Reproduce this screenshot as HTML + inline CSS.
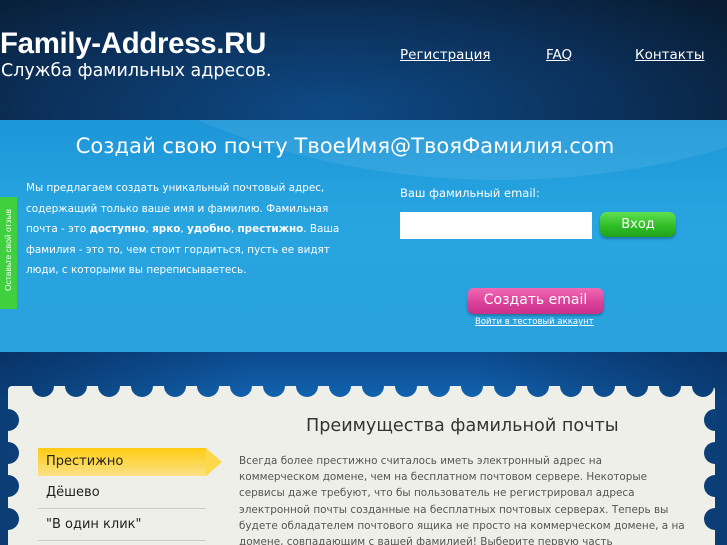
<!DOCTYPE html>
<html><head><meta charset="utf-8"><style>
*{margin:0;padding:0;box-sizing:border-box}
html,body{width:727px;height:545px;overflow:hidden}
body{font-family:"DejaVu Sans","Liberation Sans",sans-serif;background:#0d3a6e;position:relative}
#hdr{position:absolute;left:0;top:0;width:727px;height:120px;background:radial-gradient(ellipse 500px 160px at 330px 110px,#0e4a86,#0b2f58 60%,#081c33 100%)}
.logo{position:absolute;left:0;top:27px;color:#fff;font:bold 29.4px "Liberation Sans",sans-serif;letter-spacing:-0.3px}
.sub{position:absolute;left:1px;top:61px;color:#fff;font-size:17.5px}
.nav{position:absolute;top:47px;color:#fff;font-size:13.5px;text-decoration:underline}
#band{position:absolute;left:0;top:120px;width:727px;height:232px;background:linear-gradient(#1d96d8,#27a4e0 40%,#2aa2de);overflow:hidden}
#band:before{content:"";position:absolute;left:-100px;top:-820px;width:1200px;height:880px;border-radius:50%;background:rgba(255,255,255,0.08)}
h1{position:absolute;top:13px;left:0;width:690px;text-align:center;color:#fff;font-weight:normal;font-size:21.1px}
.intro{position:absolute;left:26px;top:58px;width:330px;color:#fff;font-size:10.4px;line-height:20.5px}
.lbl{position:absolute;left:400px;top:66px;color:#fff;font-size:11.5px}
.inp{position:absolute;left:400px;top:92px;width:192px;height:27px;background:#fff}
.btn{position:absolute;border-radius:7px;color:#fff;text-align:center}
.vhod{left:600px;top:92px;width:76px;height:25px;background:linear-gradient(#5fe04f,#2dbb24 60%,#21a11b);font-size:13px;line-height:25px;box-shadow:0 2px 2px rgba(0,0,0,.25)}
.create{left:467px;top:168px;width:137px;height:26px;background:linear-gradient(#f069b4,#d93f98 60%,#c9318a);font-size:14px;line-height:25px;box-shadow:0 2px 2px rgba(0,0,0,.25)}
.test{position:absolute;left:475px;top:197px;color:#fff;font-size:8.5px;text-decoration:underline}
#fb{position:absolute;left:0;top:197px;width:17px;height:112px;background:#3fcf3f}
#fb span{position:absolute;left:-44px;top:48px;width:104px;transform:rotate(-90deg);color:#fff;font:8.5px "Liberation Sans",sans-serif;white-space:nowrap;text-align:center}
#low{position:absolute;left:0;top:352px;width:727px;height:193px;background:linear-gradient(90deg,rgba(5,30,70,.55),rgba(5,30,70,0) 35%,rgba(5,30,70,0) 65%,rgba(5,30,70,.55)),linear-gradient(#0c4a8e,#1264b0 48px,#135fa8)}
svg{position:absolute;left:0;top:352px}
h2{position:absolute;left:306px;top:416px;color:#333;font-weight:normal;font-size:17.6px}
.menu{position:absolute;left:38px;width:168px;font-size:13px;color:#222;padding-left:8px}
.m1{top:448px;height:28px;line-height:28px;background:linear-gradient(#ffcc11,#fbe187);width:168px}
.m1:after{content:"";position:absolute;right:-16px;top:0;border-left:16px solid #fcd84a;border-top:14px solid transparent;border-bottom:14px solid transparent}
.m2{top:478px;height:31px;line-height:30px;border-bottom:1px solid #ccc}
.m3{top:510px;height:31px;line-height:30px;border-bottom:1px solid #ccc}
.txt{position:absolute;left:239px;top:453px;white-space:nowrap;color:#555;font-size:10.45px;line-height:16.2px}
</style></head><body>
<div id="hdr">
<div class="logo">Family-Address.RU</div>
<div class="sub">Служба фамильных адресов.</div>
<div class="nav" style="left:400px">Регистрация</div>
<div class="nav" style="left:546px">FAQ</div>
<div class="nav" style="left:635px">Контакты</div>
</div>
<div id="band">
<h1>Создай свою почту ТвоеИмя@ТвояФамилия.com</h1>
<div class="intro">Мы предлагаем создать уникальный почтовый адрес, содержащий только ваше имя и фамилию. Фамильная почта - это <b>доступно</b>, <b>ярко</b>, <b>удобно</b>, <b>престижно</b>. Ваша фамилия - это то, чем стоит гордиться, пусть ее видят люди, с которыми вы переписываетесь.</div>
<div class="lbl">Ваш фамильный email:</div>
<div class="inp"></div>
<div class="btn vhod">Вход</div>
<div class="btn create">Создать email</div>
<div class="test">Войти в тестовый аккаунт</div>
</div>
<div id="fb"><span>Оставьте свой отзыв</span></div>
<div id="low"></div>
<svg width="727" height="193"><defs><mask id="m"><rect x="8" y="34" width="707" height="170" rx="4" fill="#fff"/><g id="c" fill="#000"></g></mask></defs><rect x="0" y="0" width="727" height="193" fill="#efefea" mask="url(#m)"/></svg>
<h2>Преимущества фамильной почты</h2>
<div class="menu m1">Престижно</div>
<div class="menu m2">Дёшево</div>
<div class="menu m3">"В один клик"</div>
<div class="txt">Всегда более престижно считалось иметь электронный адрес на<br>коммерческом домене, чем на бесплатном почтовом сервере. Некоторые<br>сервисы даже требуют, что бы пользователь не регистрировал адреса<br>электронной почты созданные на бесплатных почтовых серверах. Теперь вы<br>будете обладателем почтового ящика не просто на коммерческом домене, а на<br>домене, совпадающим с вашей фамилией! Выберите первую часть</div>
<script>
var g=document.getElementById('c'),h='';
for(var x=43;x<727;x+=33)h+='<circle cx="'+x+'" cy="34" r="11"/>';
for(var y=68;y<200;y+=33){h+='<circle cx="8" cy="'+y+'" r="11"/><circle cx="715" cy="'+y+'" r="11"/>';}
g.innerHTML=h;
</script>
</body></html>
